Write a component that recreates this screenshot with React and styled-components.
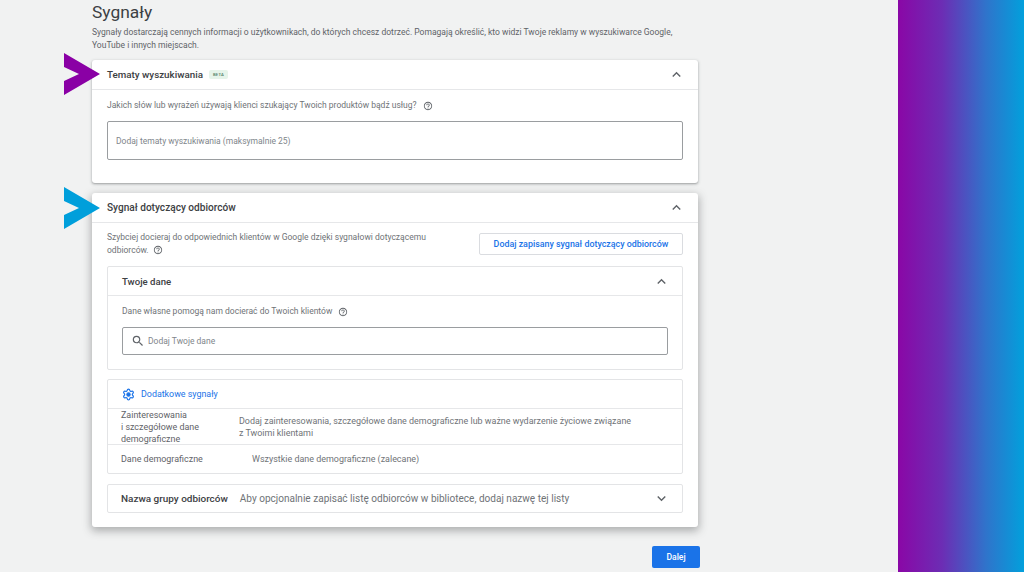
import React from "react";
import styled, { createGlobalStyle } from "styled-components";
import { MdExpandLess, MdExpandMore, MdSearch, MdHelpOutline } from "react-icons/md";
import { Settings } from "lucide-react";

const GlobalStyle = createGlobalStyle`
  html, body {
    margin: 0;
    padding: 0;
    height: 572px;
    overflow: hidden;
    background: #f1f2f2;
    font-family: Roboto, "Liberation Sans", sans-serif;
  }
  * { box-sizing: border-box; }
`;

const Page = styled.div`
  display: flex;
  width: 1024px;
  height: 572px;
  overflow: hidden;
  position: relative;
`;

const Main = styled.main`
  width: 898px;
  padding-left: 92px;
  background: #f1f2f2;
`;

const Column = styled.div`
  width: 606px;
`;

const SidePanel = styled.div`
  width: 126px;
  background: linear-gradient(90deg, #8a07a6 0%, #6c2db4 35%, #2f74cb 70%, #02a0dc 100%);
`;

const Title = styled.h1`
  margin: 0;
  padding-top: 2px;
  height: 26px;
  font-size: 17.4px;
  line-height: 21px;
  font-weight: 400;
  color: #3c4043;
`;

const Intro = styled.p`
  margin: 0 0 10px;
  height: 24px;
  font-size: 8.53px;
  line-height: 12.5px;
  color: #5f6368;
`;

const Card = styled.section`
  position: relative;
  display: flow-root;
  background: #fff;
  border-radius: 3px;
  margin-bottom: ${(p) => p.$gap || 0}px;
  box-shadow: ${(p) =>
    p.$raised
      ? "0 3px 8px 1px rgba(60,64,67,.38)"
      : "0 1px 2px rgba(60,64,67,.35), 0 1px 3px 1px rgba(60,64,67,.12)"};
`;

const CardHeader = styled.header`
  display: flex;
  align-items: center;
  height: 30px;
  padding: 0 13px 0 15px;
  border-bottom: 1px solid #e6e7e9;
`;

const HeaderTitle = styled.h2`
  margin: 0;
  font-size: ${(p) => p.$size}px;
  font-weight: 500;
  color: #3c4043;
`;

const Beta = styled.span`
  margin-left: 6px;
  padding: 1.5px 4px;
  font-size: 4.2px;
  line-height: 6px;
  font-weight: 500;
  letter-spacing: .2px;
  border-radius: 2px;
  color: #4d7a62;
  background: #e6f4ea;
`;

const Chevron = styled.span`
  display: flex;
  margin-left: auto;
  font-size: 17px;
  color: #5f6368;
`;

const CardBody = styled.div`
  padding: ${(p) => p.$padding || "0 15px"};
`;

const HintText = styled.p`
  display: flex;
  align-items: center;
  margin: 0;
  font-size: 8.53px;
  line-height: 13px;
  color: #6f7377;
`;

const Help = styled(MdHelpOutline)`
  margin-left: 6px;
  font-size: 10px;
  color: #5f6368;
  flex: none;
`;

const Field = styled.div`
  display: flex;
  align-items: center;
  height: ${(p) => p.$height}px;
  margin-top: ${(p) => p.$top}px;
  padding-left: ${(p) => p.$left}px;
  border: 1px solid #9a9da0;
  border-radius: 2px;
  font-size: 8.5px;
  color: #80868b;
`;

const SearchIcon = styled(MdSearch)`
  font-size: 14px;
  color: #5f6368;
  margin-right: 3px;
`;

const SignalRow = styled.div`
  display: flex;
  justify-content: space-between;
  padding: 8px 15px 0;
`;

const SignalText = styled.p`
  margin: 0;
  width: 340px;
  font-size: 8.53px;
  line-height: 13px;
  color: #6f7377;
`;

const InlineHelp = styled(MdHelpOutline)`
  margin-left: 4px;
  font-size: 10px;
  color: #5f6368;
  vertical-align: -2px;
`;

const OutlineButton = styled.button`
  width: 204px;
  height: 22px;
  margin-top: 2px;
  padding: 0;
  background: #fff;
  border: 1px solid #dadce0;
  border-radius: 2px;
  font: 500 8.9px Roboto, sans-serif;
  color: #1a73e8;
`;

const SubCard = styled.div`
  margin: ${(p) => p.$margin};
  border: 1px solid #e3e4e6;
  border-radius: 2px;
  background: #fff;
`;

const SubHeader = styled.header`
  display: flex;
  align-items: center;
  height: 29px;
  padding: 0 12px 0 14px;
  border-bottom: 1px solid #e6e7e9;
`;

const SubTitle = styled.h3`
  margin: 0;
  font-size: 9.6px;
  font-weight: 500;
  color: #3c4043;
`;

const Gear = styled(Settings)`
  flex: none;
  circle {
    fill: #1a73e8;
  }
`;

const SignalsLink = styled.span`
  margin-left: 6px;
  font-size: 8.9px;
  font-weight: 400;
  color: #1a73e8;
`;

const Row = styled.div`
  display: flex;
  align-items: center;
  height: ${(p) => p.$height}px;
  padding-left: 13px;
  border-bottom: ${(p) => (p.$last ? "none" : "1px solid #e6e7e9")};
  font-size: 8.95px;
  color: #6f7377;
`;

const RowLabel = styled.div`
  width: ${(p) => p.$width}px;
  flex: none;
  line-height: 12px;
  color: #5f6368;
`;

const RowValue = styled.div`
  width: 410px;
  line-height: 12px;
`;

const NameRow = styled.div`
  display: flex;
  align-items: center;
  height: 27px;
  padding: 0 12px 0 13px;
`;

const NameLabel = styled.span`
  font-size: 9.95px;
  font-weight: 500;
  color: #3c4043;
`;

const NameHint = styled.span`
  margin-left: 12px;
  font-size: 10.05px;
  color: #6f7377;
`;

const Footer = styled.div`
  display: flex;
  justify-content: flex-end;
  margin: 19px -2px 0 0;
`;

const PrimaryButton = styled.button`
  width: 48px;
  height: 22px;
  padding: 0;
  border: none;
  border-radius: 2px;
  background: #1a73e8;
  color: #fff;
  font: 500 8.6px Roboto, sans-serif;
`;

const Marker = styled.svg`
  position: absolute;
  left: 64px;
  top: ${(p) => p.$top}px;
  width: 36px;
  height: 42px;
  fill: ${(p) => p.$color};
`;

const ArrowMark = ({ top, color }) => (
  <Marker $top={top} $color={color} viewBox="0 0 36 42">
    <path d="M0 0 L36 21 L0 42 L0 28 L15 21 L0 14 Z" />
  </Marker>
);

export default function App() {
  return (
    <Page>
      <GlobalStyle />
      <Main>
        <Column>
          <Title>Sygnały</Title>
          <Intro>
            Sygnały dostarczają cennych informacji o użytkownikach, do których chcesz dotrzeć. Pomagają określić, kto widzi Twoje reklamy w wyszukiwarce Google,
            <br />
            YouTube i innych miejscach.
          </Intro>

          <Card $gap={10}>
            <CardHeader>
              <HeaderTitle $size={9.8}>Tematy wyszukiwania</HeaderTitle>
              <Beta>BETA</Beta>
              <Chevron><MdExpandLess /></Chevron>
            </CardHeader>
            <CardBody $padding="9px 15px 23px">
              <HintText>
                Jakich słów lub wyrażeń używają klienci szukający Twoich produktów bądź usług?
                <Help />
              </HintText>
              <Field $height={39} $top={9} $left={8}>Dodaj tematy wyszukiwania (maksymalnie 25)</Field>
            </CardBody>
          </Card>

          <Card $raised>
            <CardHeader>
              <HeaderTitle $size={10.1}>Sygnał dotyczący odbiorców</HeaderTitle>
              <Chevron><MdExpandLess /></Chevron>
            </CardHeader>
            <SignalRow>
              <SignalText>
                Szybciej docieraj do odpowiednich klientów w Google dzięki sygnałowi dotyczącemu odbiorców.
                <InlineHelp />
              </SignalText>
              <OutlineButton>Dodaj zapisany sygnał dotyczący odbiorców</OutlineButton>
            </SignalRow>

            <SubCard $margin="9px 15px 0">
              <SubHeader>
                <SubTitle>Twoje dane</SubTitle>
                <Chevron><MdExpandLess /></Chevron>
              </SubHeader>
              <CardBody $padding="9px 14px 14px">
                <HintText>
                  Dane własne pomogą nam docierać do Twoich klientów
                  <Help />
                </HintText>
                <Field $height={28} $top={9} $left={8}>
                  <SearchIcon />
                  Dodaj Twoje dane
                </Field>
              </CardBody>
            </SubCard>

            <SubCard $margin="9px 15px 0">
              <SubHeader>
                <Gear size={13} color="#1a73e8" strokeWidth={2.2} />
                <SignalsLink>Dodatkowe sygnały</SignalsLink>
              </SubHeader>
              <Row $height={36}>
                <RowLabel $width={118}>Zainteresowania<br />i szczegółowe dane<br />demograficzne</RowLabel>
                <RowValue>Dodaj zainteresowania, szczegółowe dane demograficzne lub ważne wydarzenie życiowe związane<br />z Twoimi klientami</RowValue>
              </Row>
              <Row $height={28} $last>
                <RowLabel $width={131}>Dane demograficzne</RowLabel>
                <RowValue>Wszystkie dane demograficzne (zalecane)</RowValue>
              </Row>
            </SubCard>

            <SubCard $margin="10px 15px 14px">
              <NameRow>
                <NameLabel>Nazwa grupy odbiorców</NameLabel>
                <NameHint>Aby opcjonalnie zapisać listę odbiorców w bibliotece, dodaj nazwę tej listy</NameHint>
                <Chevron><MdExpandMore /></Chevron>
              </NameRow>
            </SubCard>
          </Card>

          <Footer>
            <PrimaryButton>Dalej</PrimaryButton>
          </Footer>
        </Column>
      </Main>
      <SidePanel />
      <ArrowMark top={53} color="#8a00a5" />
      <ArrowMark top={187} color="#009fdb" />
    </Page>
  );
}
